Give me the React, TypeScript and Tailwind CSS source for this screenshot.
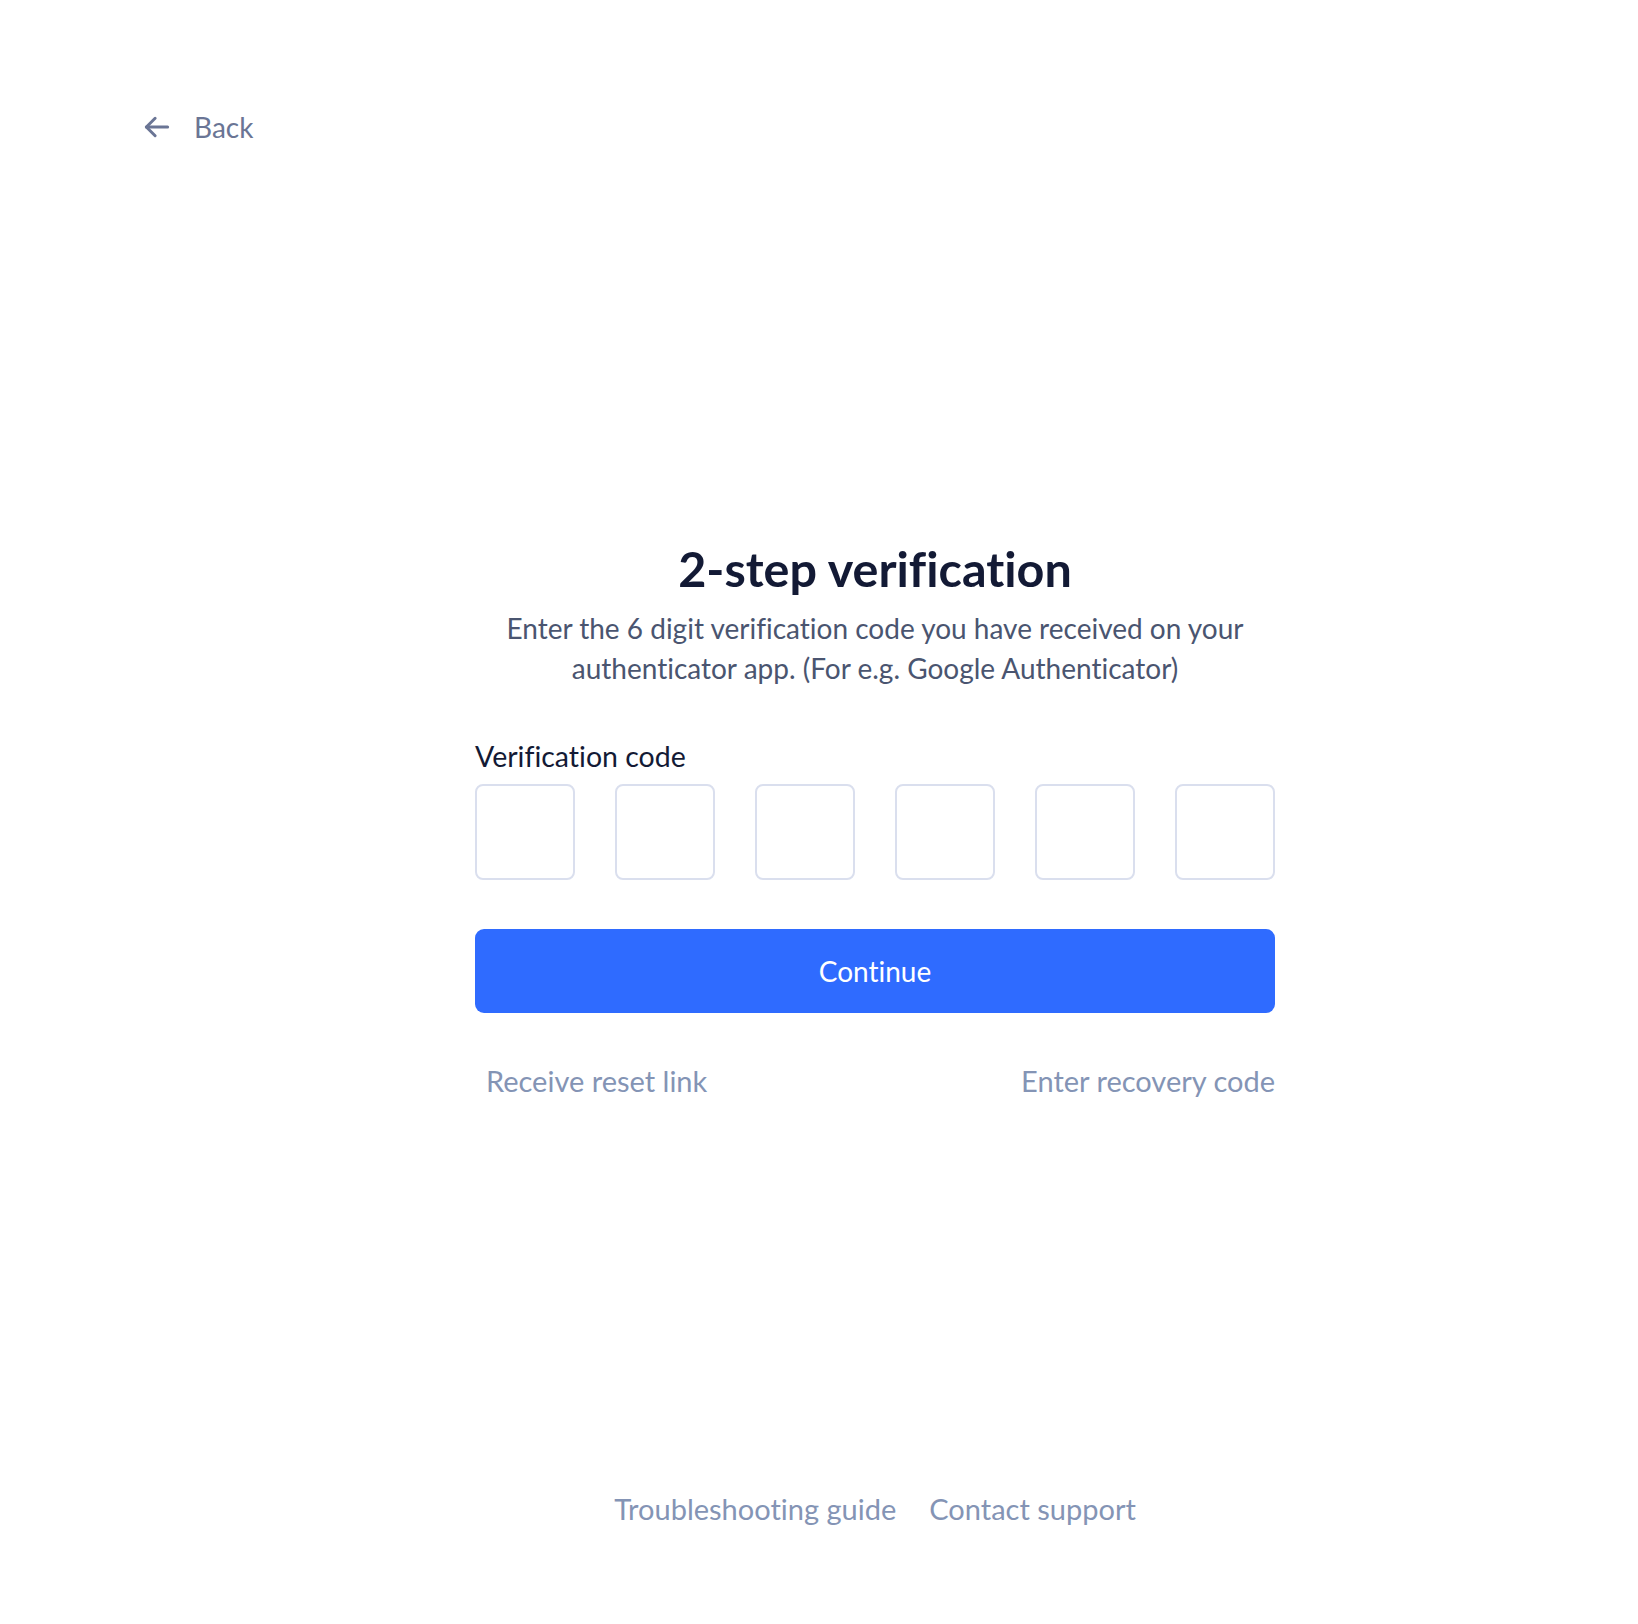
import React from 'react'

function ArrowLeft() {
   return (
      <svg width="30" height="30" viewBox="0 0 24 24" fill="none" stroke="currentColor" strokeWidth="2.4" strokeLinecap="round" strokeLinejoin="round">
         <path d="M20.5 12H3.5" />
         <path d="M10.5 5l-7 7 7 7" />
      </svg>
   )
}

export default function App() {
   return (
      <div className="min-h-screen bg-white font-['Lato',sans-serif] [font-variant-ligatures:none]">
         <header className="pl-[142px] pt-[108px]">
            <a href="#" className="inline-flex items-center gap-[22px] text-[28px] leading-[38px] text-[#6a7595]">
               <ArrowLeft />
               <span>Back</span>
            </a>
         </header>

         <main className="pl-[112px] pt-[394px] flex flex-col items-center">
            <div className="w-[800px] flex flex-col">
               <h1 className="text-center text-[48.5px] leading-[52px] font-bold text-[#131a35]">
                  2-step verification
               </h1>
               <p className="mt-[14px] text-center text-[28px] leading-[40px] text-[#4a5570]">
                  Enter the 6 digit verification code you have received on your
                  <br />
                  authenticator app. (For e.g. Google Authenticator)
               </p>

               <label className="mt-[50px] text-[28.5px] leading-[36px] text-[#131a35]">
                  Verification code
               </label>
               <div className="mt-[10px] flex gap-10">
                  {[0, 1, 2, 3, 4, 5].map((i) => (
                     <input
                        key={i}
                        maxLength={1}
                        className="w-[100px] h-[96px] rounded-[8px] border-2 border-[#dadfee] text-center text-[32px] outline-none"
                     />
                  ))}
               </div>

               <button className="mt-[49px] h-[84px] rounded-[9px] bg-[#2f6bff] text-white text-[28px]">
                  Continue
               </button>

               <div className="mt-[50px] flex justify-between pl-[11px] text-[29px] leading-[36px] text-[#8494b5]">
                  <a href="#">Receive reset link</a>
                  <a href="#">Enter recovery code</a>
               </div>
            </div>
         </main>

         <footer className="pl-[112px] pt-[392px] flex justify-center gap-[33px] text-[29px] leading-[36px] text-[#8494b5]">
            <a href="#">Troubleshooting guide</a>
            <a href="#">Contact support</a>
         </footer>
      </div>
   )
}
